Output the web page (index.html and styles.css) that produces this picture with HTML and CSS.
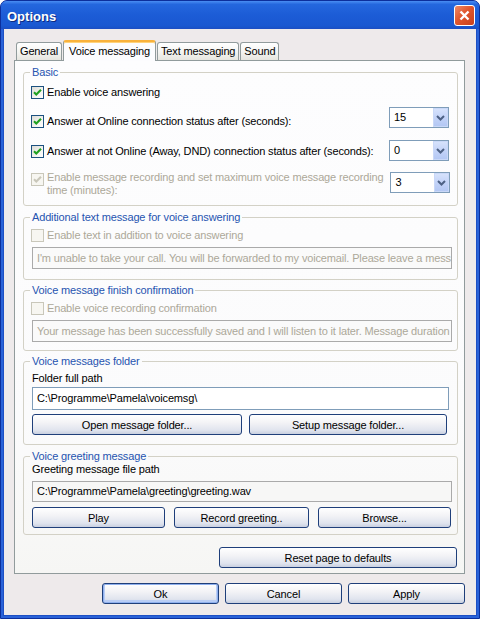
FILE: index.html
```html
<!DOCTYPE html>
<html lang="en">
<head>
    <meta charset="UTF-8">
    <meta name="viewport" content="width=device-width, initial-scale=1.0">
    <title>Options</title>
    <link rel="stylesheet" href="styles.css">
</head>
<body>
    <div class="window">
        <div class="titlebar">
            <span class="title">Options</span>
            <span class="close"><svg width="19" height="19" viewBox="0 0 19 19"><path d="M5.5 5.5 L13.5 13.5 M13.5 5.5 L5.5 13.5"/></svg></span>
        </div>

        <div class="client">
            <div class="tabs">
                <span class="tab">General</span>
                <span class="tab active">Voice messaging</span>
                <span class="tab">Text messaging</span>
                <span class="tab">Sound</span>
            </div>

            <div class="panel">
                <!-- basic -->
                <fieldset class="group g-basic">
                    <legend>Basic</legend>
                    <div class="opt row1">
                        <span class="check on"><svg width="11" height="11" viewBox="0 0 11 11"><path d="M2 5.2 L4.3 7.5 L9 2.8"/></svg></span>
                        <span class="label">Enable voice answering</span>
                    </div>
                    <div class="opt row2">
                        <span class="check on"><svg width="11" height="11" viewBox="0 0 11 11"><path d="M2 5.2 L4.3 7.5 L9 2.8"/></svg></span>
                        <span class="label">Answer at Online connection status after (seconds):</span>
                        <span class="combo"><span class="val">15</span><span class="drop"><svg width="15" height="19" viewBox="0 0 15 19"><path d="M4 8 L7.5 11.5 L11 8"/></svg></span></span>
                    </div>
                    <div class="opt row3">
                        <span class="check on"><svg width="11" height="11" viewBox="0 0 11 11"><path d="M2 5.2 L4.3 7.5 L9 2.8"/></svg></span>
                        <span class="label">Answer at not Online (Away, DND) connection status after (seconds):</span>
                        <span class="combo"><span class="val">0</span><span class="drop"><svg width="15" height="19" viewBox="0 0 15 19"><path d="M4 8 L7.5 11.5 L11 8"/></svg></span></span>
                    </div>
                    <div class="opt row4 off">
                        <span class="check on"><svg width="11" height="11" viewBox="0 0 11 11"><path d="M2 5.2 L4.3 7.5 L9 2.8"/></svg></span>
                        <span class="label">Enable message recording and set maximum voice message recording<br>time (minutes):</span>
                        <span class="combo"><span class="val">3</span><span class="drop"><svg width="15" height="19" viewBox="0 0 15 19"><path d="M4 8 L7.5 11.5 L11 8"/></svg></span></span>
                    </div>
                </fieldset>

                <!-- text message -->
                <fieldset class="group g-extra">
                    <legend>Additional text message for voice answering</legend>
                    <div class="opt off sub">
                        <span class="check"></span>
                        <span class="label">Enable text in addition to voice answering</span>
                    </div>
                    <div class="field off">I'm unable to take your call. You will be forwarded to my voicemail. Please leave a message after the tone.</div>
                </fieldset>

                <fieldset class="group g-confirm">
                    <legend>Voice message finish confirmation</legend>
                    <div class="opt off sub">
                        <span class="check"></span>
                        <span class="label">Enable voice recording confirmation</span>
                    </div>
                    <div class="field off">Your message has been successfully saved and I will listen to it later. Message duration was</div>
                </fieldset>

                <!-- folders -->
                <fieldset class="group g-folder">
                    <legend>Voice messages folder</legend>
                    <div class="caption folder-cap">Folder full path</div>
                    <div class="field path">C:\Programme\Pamela\voicemsg\</div>
                    <div class="btnrow two">
                        <button class="btn">Open message folder...</button>
                        <button class="btn">Setup message folder...</button>
                    </div>
                </fieldset>

                <fieldset class="group g-greeting">
                    <legend>Voice greeting message</legend>
                    <div class="caption">Greeting message file path</div>
                    <div class="field ro">C:\Programme\Pamela\greeting\greeting.wav</div>
                    <div class="btnrow three">
                        <button class="btn">Play</button>
                        <button class="btn">Record greeting..</button>
                        <button class="btn">Browse...</button>
                    </div>
                </fieldset>

                <div class="reset-row">
                    <button class="btn reset">Reset page to defaults</button>
                </div>
            </div>

            <div class="footer">
                <button class="btn default">Ok</button>
                <button class="btn">Cancel</button>
                <button class="btn">Apply</button>
            </div>
        </div>
    </div>
</body>
</html>
```

FILE: styles.css
```css
*{
    margin: 0;
    padding: 0;
    box-sizing: border-box;
}

body{
    background: #ffffff;
    font-family: "Liberation Sans", Arial, sans-serif;
    font-size: 11px;
    letter-spacing: -0.15px;
    color: #000000;
}

.window{
    width: 480px;
    height: 619px;
    display: flex;
    flex-direction: column;
    background: #2a62d8;
    border: 1px solid #0c2f9c;
    border-radius: 7px 7px 0 0;
    overflow: hidden;
}

/* title bar */
.titlebar{
    height: 28px;
    flex: none;
    display: flex;
    align-items: center;
    justify-content: space-between;
    padding: 0 4px 0 6px;
    background: linear-gradient(#4a8ef3, #2467de 12%, #1c5cd6 50%, #1a58d1 88%, #1850c4);
}

.title{
    color: #ffffff;
    font-weight: bold;
    font-size: 13px;
    letter-spacing: 0;
    padding-top: 2px;
    text-shadow: 1px 1px 0 #0d2a80;
}

.close{
    width: 21px;
    height: 21px;
    border: 1px solid #ffffff;
    border-radius: 3px;
    background: linear-gradient(135deg, #ef8a68, #e0562e 45%, #c8401c);
}

.close svg{
    display: block;
}

.close path{
    stroke: #ffffff;
    stroke-width: 2.4;
    fill: none;
}

/* dialog body */
.client{
    flex: 1;
    display: flex;
    flex-direction: column;
    margin: 0 3px 3px;
    padding: 11px 11px 11px 10px;
    background: #eeeaeb;
    box-shadow: 0 0 0 1px #1d4fc4;
}

.tabs{
    height: 20px;
    display: flex;
    align-items: flex-end;
    gap: 1px;
    padding-left: 2px;
}

.tab{
    height: 18px;
    line-height: 17px;
    padding: 0 3px;
    border: 1px solid #919b9c;
    border-bottom: none;
    border-radius: 3px 3px 0 0;
    background: linear-gradient(#ffffff, #f5f5f3 50%, #e6e5df);
}

.tab.active{
    height: 21px;
    line-height: 18px;
    padding: 0 5px;
    margin-bottom: -1px;
    position: relative;
    background: #fcfcfe;
    border-top: 2px solid #f9b23c;
    box-shadow: inset 0 1px 0 #ffd27a;
}

.panel{
    flex: 1;
    display: flex;
    flex-direction: column;
    padding: 5px 6px 5px 8px;
    border: 1px solid #919b9c;
    background: linear-gradient(#fdfdfe, #fbfbfc 70%, #f6f6f4);
}

/* group boxes */
.group{
    min-width: 0;
    border: 1px solid #d3d1c6;
    border-radius: 3px;
    padding: 0 5px 8px 8px;
}

.group legend{
    color: #2654b0;
    line-height: 13px;
    padding: 0 2px;
    margin-left: -2px;
}

.g-extra{
    margin-top: 5px;
    padding-bottom: 10px;
}

.g-confirm{
    margin-top: 4px;
}

.g-folder{
    margin-top: 4px;
    padding-bottom: 9px;
}

.g-greeting{
    margin-top: 5px;
    padding-bottom: 6px;
}

.opt{
    display: flex;
    gap: 3px;
    line-height: 13px;
}

.opt .label{
    flex: 1;
}

.row1{
    margin-top: 7px;
}

.row2{
    margin-top: 8px;
    align-items: flex-end;
}

.row3{
    margin-top: 12px;
    align-items: flex-end;
}

.row3 .check,
.row3 .label{
    margin-bottom: 3px;
}

.row4{
    margin-top: 10px;
    align-items: flex-start;
}

.row4 .label{
    white-space: nowrap;
}

.row4 .check{
    margin-top: 2px;
}

.row4 .combo{
    margin-top: 1px;
}

.sub{
    margin-top: 5px;
}

.off{
    color: #aca899;
}

.check{
    width: 13px;
    height: 13px;
    flex: none;
    margin-left: -1px;
    border: 1px solid #1c5180;
    background: linear-gradient(135deg, #dcdcd6, #f4f4f1 60%, #ffffff);
}

.check svg{
    display: block;
}

.check path{
    fill: none;
    stroke: #21a121;
    stroke-width: 2.1;
}

.off .check{
    border-color: #c9c7ba;
    background: #f7f6f1;
}

.off .check path{
    stroke: #c9c7ba;
}

.combo{
    width: 60px;
    height: 21px;
    flex: none;
    display: flex;
    margin-left: 4px;
    margin-right: 3px;
    border: 1px solid #7f9db9;
    background: #ffffff;
    color: #000000;
}

.combo .val{
    flex: 1;
    padding-left: 4px;
    line-height: 19px;
}

.combo .drop{
    width: 15px;
    background: linear-gradient(#d6e2fc, #c3d3f8 50%, #b4c8f4);
    border: 1px solid #c9d8f8;
}

.combo .drop svg{
    display: block;
    margin: -1px 0 0 -1px;
}

.combo .drop path{
    fill: none;
    stroke: #4d6185;
    stroke-width: 2;
}

.field{
    height: 22px;
    margin-top: 5px;
    padding: 0 4px;
    line-height: 20px;
    white-space: nowrap;
    overflow: hidden;
    border: 1px solid #7f9db9;
    background: #ffffff;
}

.field.off{
    border-color: #aaaaaa;
    background: #fafafa;
}

.field.path{
    width: 417px;
    height: 23px;
    margin-top: 2px;
    line-height: 21px;
}

.field.ro{
    height: 21px;
    line-height: 19px;
    border-color: #aaaaaa;
    background: #f7f7f6;
}

.caption{
    line-height: 13px;
}

.folder-cap{
    margin-top: 4px;
}

.btnrow{
    display: grid;
}

.btnrow.two{
    grid-template-columns: 210px 198px;
    column-gap: 7px;
    margin-top: 4px;
}

.btnrow.three{
    grid-template-columns: 133px 135px 133px;
    column-gap: 9px;
    margin-top: 5px;
}

/* buttons */
.btn{
    height: 21px;
    font: inherit;
    letter-spacing: inherit;
    color: #000000;
    border: 1px solid #1f3f7a;
    border-radius: 3px;
    background: linear-gradient(#ffffff, #f3f3f6 40%, #e0e4ee 80%, #c9d0e0);
}

.reset-row{
    display: flex;
    justify-content: flex-end;
    margin-top: 12px;
    padding-right: 1px;
}

.btn.reset{
    width: 238px;
}

.footer{
    display: flex;
    justify-content: flex-end;
    gap: 6px;
    margin-top: 9px;
}

.footer .btn{
    width: 117px;
}

.btn.default{
    box-shadow: inset 0 0 0 1px #8fb0ee, inset 0 -1px 0 2px #b9cdf5;
}
```
